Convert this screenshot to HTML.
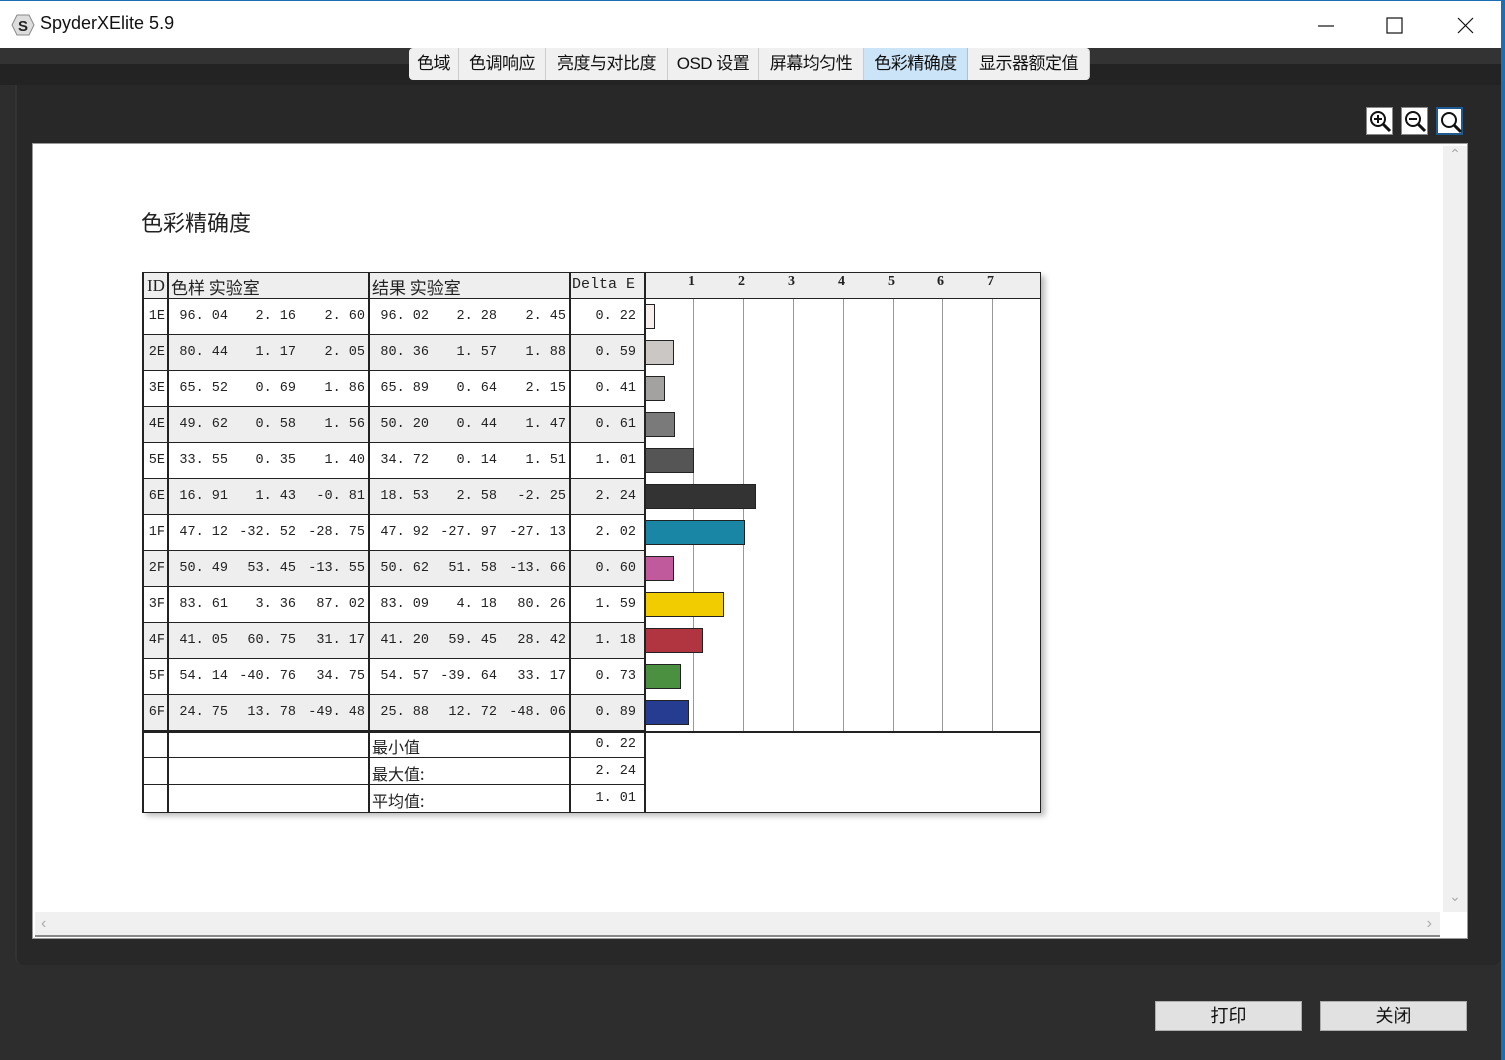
<!DOCTYPE html>
<html><head><meta charset="utf-8"><style>
*{margin:0;padding:0;box-sizing:border-box}
body{width:1505px;height:1060px;background:#2d2d2d;position:relative;overflow:hidden;font-family:"Liberation Sans","Noto Sans CJK SC",sans-serif}
.abs{position:absolute}
#title{left:0;top:0;width:1505px;height:48px;background:#fff;border-top:1px solid #1a6fb5}
#title .t{left:40px;top:12px;font-size:18px;color:#111}
.tab{position:absolute;top:48px;height:32px;background:#f0f0f0;border-right:1px solid #ccc;font-size:17px;color:#111;text-align:center;line-height:31px;letter-spacing:-0.5px}
.row{position:absolute;left:142px;width:899px;height:36px;font-family:"Liberation Mono","Noto Serif CJK SC",monospace;font-size:13.5px;color:#222}
.cell{position:absolute;top:0;height:36px;line-height:36px;width:70px;text-align:right;white-space:pre}
.vl{position:absolute;top:0;width:1.5px;background:#222}
.gl{position:absolute;top:0;width:1px;background:#c8c8c8}
.bar{position:absolute;left:502px;top:5px;height:25px;border:1.5px solid #222}
.btn{position:absolute;top:1001px;width:147px;height:30px;background:#e1e1e1;border:1px solid #adadad;font-size:18px;text-align:center;line-height:28px;color:#111}
.zi{position:absolute;top:107px;width:27px;height:28px;background:#fff;border:1px solid #888}
.lab{position:absolute;left:230px;top:3px;font-family:'Noto Sans CJK SC',sans-serif;font-size:16px}
</style></head><body>
<div id="title" class="abs">
<svg class="abs" style="left:11px;top:13px" width="24" height="22"><polygon points="6,1 18,1 23,11 18,21 6,21 1,11" fill="#ddd" stroke="#888"/><text x="12" y="17" font-size="15" font-weight="bold" text-anchor="middle" fill="#222" font-family="Liberation Sans">S</text></svg>
<div class="abs t">SpyderXElite 5.9</div>
<svg class="abs" style="left:1316px;top:15px" width="170" height="20" stroke="#111" stroke-width="1.2" fill="none"><line x1="2" y1="10" x2="18" y2="10"/><rect x="71" y="2" width="15" height="15"/><line x1="142" y1="2" x2="157" y2="17"/><line x1="157" y1="2" x2="142" y2="17"/></svg>
</div>
<div class="abs" style="left:1501px;top:0;width:4px;height:1060px;background:#1a6fb5"></div>
<div class="abs" style="left:0;top:48px;width:1501px;height:16px;background:#333"></div>
<div class="abs" style="left:0;top:64px;width:1501px;height:21px;background:#232323"></div>
<div class="abs" style="left:15px;top:85px;width:1486px;height:880px;background:#282828;border-radius:0 0 8px 8px;border-left:2px solid #333"></div>
<div class="tab" style="left:409px;width:50px;border-radius:4px 0 0 4px">色域</div>
<div class="tab" style="left:459px;width:87px">色调响应</div>
<div class="tab" style="left:546px;width:122px">亮度与对比度</div>
<div class="tab" style="left:668px;width:91px">OSD 设置</div>
<div class="tab" style="left:759px;width:105px">屏幕均匀性</div>
<div class="tab" style="left:864px;width:104px;background:#cce4f7;border-right:1px solid #9cc">色彩精确度</div>
<div class="tab" style="left:968px;width:122px;border-radius:0 4px 4px 0">显示器额定值</div>

<div class="zi" style="left:1366px"><svg width="25" height="26" stroke="#111" stroke-width="2" fill="none"><circle cx="11" cy="11" r="7"/><line x1="16" y1="16" x2="23" y2="23" stroke-width="3"/><line x1="7" y1="11" x2="15" y2="11"/><line x1="11" y1="7" x2="11" y2="15"/></svg></div>
<div class="zi" style="left:1401px"><svg width="25" height="26" stroke="#111" stroke-width="2" fill="none"><circle cx="11" cy="11" r="7"/><line x1="16" y1="16" x2="23" y2="23" stroke-width="3"/><line x1="7" y1="11" x2="15" y2="11"/></svg></div>
<div class="zi" style="left:1436px;border:2px solid #1d5a90"><svg width="25" height="26" stroke="#111" stroke-width="2" fill="none"><circle cx="11" cy="11" r="7"/><line x1="16" y1="16" x2="23" y2="23" stroke-width="3"/></svg></div>

<div class="abs" style="left:32px;top:143px;width:1436px;height:796px;background:#fff;border:1px solid #999"></div>
<div class="abs" style="left:1443px;top:146px;width:24px;height:766px;background:#f0f0f0;color:#aaa;font-size:14px;text-align:center">&#8963;<div style="position:absolute;top:742px;width:24px">&#8964;</div></div>
<div class="abs" style="left:35px;top:912px;width:1405px;height:25px;background:#f0f0f0;color:#aaa;font-size:16px;line-height:24px;padding-left:6px;border-bottom:2px solid #888">&#8249;<span style="position:absolute;right:8px">&#8250;</span></div>

<div class="abs" style="left:141px;top:206px;font-size:22px;color:#222;font-family:'Liberation Sans','Noto Sans CJK SC',sans-serif">色彩精确度</div>

<div class="abs" style="left:146px;top:276px;width:899px;height:540px;background:#bbb;filter:blur(3px)"></div>
<div class="abs" style="left:142px;top:272px;width:899px;height:541px;background:#fff;border:1.5px solid #222"></div>

<div class="abs" style="left:142px;top:272px;width:899px;height:460px">
<div class="gl" style="left:551px;top:20px;height:439px;background:#999"></div>
<div class="gl" style="left:601px;top:20px;height:439px;background:#999"></div>
<div class="gl" style="left:651px;top:20px;height:439px;background:#999"></div>
<div class="gl" style="left:701px;top:20px;height:439px;background:#999"></div>
<div class="gl" style="left:751px;top:20px;height:439px;background:#999"></div>
<div class="gl" style="left:800px;top:20px;height:439px;background:#999"></div>
<div class="gl" style="left:850px;top:20px;height:439px;background:#999"></div>
</div>

<div class="row" style="top:272px;height:27px;background:#eee;border:1.5px solid #222;font-family:'Liberation Serif','Noto Sans CJK SC',serif;font-size:17px">
<div class="abs" style="left:4px;top:3px">ID</div>
<div class="abs" style="left:28px;top:1px;font-family:'Noto Sans CJK SC',sans-serif">色样 实验室</div>
<div class="abs" style="left:229px;top:1px;font-family:'Noto Sans CJK SC',sans-serif">结果 实验室</div>
<div class="abs" style="left:429px;top:3px;font-family:'Liberation Mono',monospace;font-size:15px">Delta E</div>
<div class="abs" style="left:545px;top:1px;font-size:14px;font-weight:bold">1</div>
<div class="abs" style="left:595px;top:1px;font-size:14px;font-weight:bold">2</div>
<div class="abs" style="left:645px;top:1px;font-size:14px;font-weight:bold">3</div>
<div class="abs" style="left:695px;top:1px;font-size:14px;font-weight:bold">4</div>
<div class="abs" style="left:745px;top:1px;font-size:14px;font-weight:bold">5</div>
<div class="abs" style="left:794px;top:1px;font-size:14px;font-weight:bold">6</div>
<div class="abs" style="left:844px;top:1px;font-size:14px;font-weight:bold">7</div>
</div>

<div class="row" style="top:299px"><div class="abs" style="left:0;width:502px;height:36px;border-bottom:1.5px solid #222"></div><div class="cell" style="left:-47px">1E</div><div class="cell" style="left:16px">96. 04</div><div class="cell" style="left:84px">2. 16</div><div class="cell" style="left:153px">2. 60</div><div class="cell" style="left:217px">96. 02</div><div class="cell" style="left:285px">2. 28</div><div class="cell" style="left:354px">2. 45</div><div class="cell" style="left:424px">0. 22</div><div class="bar" style="width:11px;background:#f7efeb"></div></div>
<div class="row" style="top:335px"><div class="abs" style="left:0;width:502px;height:36px;background:#eee;border-bottom:1.5px solid #222"></div><div class="cell" style="left:-47px">2E</div><div class="cell" style="left:16px">80. 44</div><div class="cell" style="left:84px">1. 17</div><div class="cell" style="left:153px">2. 05</div><div class="cell" style="left:217px">80. 36</div><div class="cell" style="left:285px">1. 57</div><div class="cell" style="left:354px">1. 88</div><div class="cell" style="left:424px">0. 59</div><div class="bar" style="width:30px;background:#cac7c5"></div></div>
<div class="row" style="top:371px"><div class="abs" style="left:0;width:502px;height:36px;border-bottom:1.5px solid #222"></div><div class="cell" style="left:-47px">3E</div><div class="cell" style="left:16px">65. 52</div><div class="cell" style="left:84px">0. 69</div><div class="cell" style="left:153px">1. 86</div><div class="cell" style="left:217px">65. 89</div><div class="cell" style="left:285px">0. 64</div><div class="cell" style="left:354px">2. 15</div><div class="cell" style="left:424px">0. 41</div><div class="bar" style="width:21px;background:#a3a2a0"></div></div>
<div class="row" style="top:407px"><div class="abs" style="left:0;width:502px;height:36px;background:#eee;border-bottom:1.5px solid #222"></div><div class="cell" style="left:-47px">4E</div><div class="cell" style="left:16px">49. 62</div><div class="cell" style="left:84px">0. 58</div><div class="cell" style="left:153px">1. 56</div><div class="cell" style="left:217px">50. 20</div><div class="cell" style="left:285px">0. 44</div><div class="cell" style="left:354px">1. 47</div><div class="cell" style="left:424px">0. 61</div><div class="bar" style="width:31px;background:#7a7a7a"></div></div>
<div class="row" style="top:443px"><div class="abs" style="left:0;width:502px;height:36px;border-bottom:1.5px solid #222"></div><div class="cell" style="left:-47px">5E</div><div class="cell" style="left:16px">33. 55</div><div class="cell" style="left:84px">0. 35</div><div class="cell" style="left:153px">1. 40</div><div class="cell" style="left:217px">34. 72</div><div class="cell" style="left:285px">0. 14</div><div class="cell" style="left:354px">1. 51</div><div class="cell" style="left:424px">1. 01</div><div class="bar" style="width:50px;background:#555"></div></div>
<div class="row" style="top:479px"><div class="abs" style="left:0;width:502px;height:36px;background:#eee;border-bottom:1.5px solid #222"></div><div class="cell" style="left:-47px">6E</div><div class="cell" style="left:16px">16. 91</div><div class="cell" style="left:84px">1. 43</div><div class="cell" style="left:153px">-0. 81</div><div class="cell" style="left:217px">18. 53</div><div class="cell" style="left:285px">2. 58</div><div class="cell" style="left:354px">-2. 25</div><div class="cell" style="left:424px">2. 24</div><div class="bar" style="width:112px;background:#333"></div></div>
<div class="row" style="top:515px"><div class="abs" style="left:0;width:502px;height:36px;border-bottom:1.5px solid #222"></div><div class="cell" style="left:-47px">1F</div><div class="cell" style="left:16px">47. 12</div><div class="cell" style="left:84px">-32. 52</div><div class="cell" style="left:153px">-28. 75</div><div class="cell" style="left:217px">47. 92</div><div class="cell" style="left:285px">-27. 97</div><div class="cell" style="left:354px">-27. 13</div><div class="cell" style="left:424px">2. 02</div><div class="bar" style="width:101px;background:#1a86a6"></div></div>
<div class="row" style="top:551px"><div class="abs" style="left:0;width:502px;height:36px;background:#eee;border-bottom:1.5px solid #222"></div><div class="cell" style="left:-47px">2F</div><div class="cell" style="left:16px">50. 49</div><div class="cell" style="left:84px">53. 45</div><div class="cell" style="left:153px">-13. 55</div><div class="cell" style="left:217px">50. 62</div><div class="cell" style="left:285px">51. 58</div><div class="cell" style="left:354px">-13. 66</div><div class="cell" style="left:424px">0. 60</div><div class="bar" style="width:30px;background:#c05a9c"></div></div>
<div class="row" style="top:587px"><div class="abs" style="left:0;width:502px;height:36px;border-bottom:1.5px solid #222"></div><div class="cell" style="left:-47px">3F</div><div class="cell" style="left:16px">83. 61</div><div class="cell" style="left:84px">3. 36</div><div class="cell" style="left:153px">87. 02</div><div class="cell" style="left:217px">83. 09</div><div class="cell" style="left:285px">4. 18</div><div class="cell" style="left:354px">80. 26</div><div class="cell" style="left:424px">1. 59</div><div class="bar" style="width:80px;background:#f0cc00"></div></div>
<div class="row" style="top:623px"><div class="abs" style="left:0;width:502px;height:36px;background:#eee;border-bottom:1.5px solid #222"></div><div class="cell" style="left:-47px">4F</div><div class="cell" style="left:16px">41. 05</div><div class="cell" style="left:84px">60. 75</div><div class="cell" style="left:153px">31. 17</div><div class="cell" style="left:217px">41. 20</div><div class="cell" style="left:285px">59. 45</div><div class="cell" style="left:354px">28. 42</div><div class="cell" style="left:424px">1. 18</div><div class="bar" style="width:59px;background:#b03540"></div></div>
<div class="row" style="top:659px"><div class="abs" style="left:0;width:502px;height:36px;border-bottom:1.5px solid #222"></div><div class="cell" style="left:-47px">5F</div><div class="cell" style="left:16px">54. 14</div><div class="cell" style="left:84px">-40. 76</div><div class="cell" style="left:153px">34. 75</div><div class="cell" style="left:217px">54. 57</div><div class="cell" style="left:285px">-39. 64</div><div class="cell" style="left:354px">33. 17</div><div class="cell" style="left:424px">0. 73</div><div class="bar" style="width:37px;background:#4a9040"></div></div>
<div class="row" style="top:695px"><div class="abs" style="left:0;width:502px;height:36px;background:#eee;border-bottom:1.5px solid #222"></div><div class="cell" style="left:-47px">6F</div><div class="cell" style="left:16px">24. 75</div><div class="cell" style="left:84px">13. 78</div><div class="cell" style="left:153px">-49. 48</div><div class="cell" style="left:217px">25. 88</div><div class="cell" style="left:285px">12. 72</div><div class="cell" style="left:354px">-48. 06</div><div class="cell" style="left:424px">0. 89</div><div class="bar" style="width:45px;background:#253c90"></div></div>

<div class="abs" style="left:142px;top:731px;width:899px;height:1.5px;background:#222"></div>
<div class="row" style="top:731px;height:27px"><div class="abs" style="left:0;width:502px;height:27px;border-bottom:1.5px solid #222"></div><div class="lab">最小值</div><div class="cell" style="left:424px;height:27px;line-height:27px">0. 22</div></div>
<div class="row" style="top:758px;height:27px"><div class="abs" style="left:0;width:502px;height:27px;border-bottom:1.5px solid #222"></div><div class="lab">最大值:</div><div class="cell" style="left:424px;height:27px;line-height:27px">2. 24</div></div>
<div class="row" style="top:785px;height:27px"><div class="lab">平均值:</div><div class="cell" style="left:424px;height:27px;line-height:27px">1. 01</div></div>

<div class="abs" style="left:142px;top:272px;width:899px;height:541px">
<div class="vl" style="left:0;height:541px"></div>
<div class="vl" style="left:25px;height:541px"></div>
<div class="vl" style="left:226px;height:541px"></div>
<div class="vl" style="left:427px;height:541px"></div>
<div class="vl" style="left:502px;height:541px"></div>
</div>

<div class="btn" style="left:1155px">打印</div>
<div class="btn" style="left:1320px">关闭</div>
</body></html>
